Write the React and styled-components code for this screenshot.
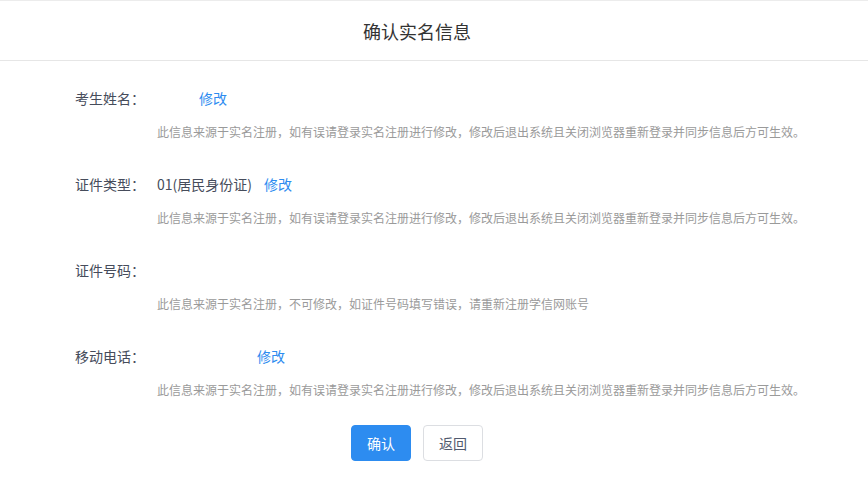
import React from "react";
import styled, { createGlobalStyle } from "styled-components";

const Global = createGlobalStyle`
  html, body { margin: 0; padding: 0; background: #fff; }
  body { font-family: "Noto Sans CJK SC", "Noto Sans", sans-serif; }
`;

const Page = styled.div`
  width: 868px;
  min-height: 495px;
  background: #fff;
`;

const Header = styled.header`
  height: 59px;
  border-top: 1px solid #ececec;
  border-bottom: 1px solid #e6e6e6;
  display: flex;
  align-items: center;
  justify-content: center;
  padding-right: 34px;
  font-size: 18px;
  color: #333;
`;

const Content = styled.div`
  padding: 27px 0 0 75px;
`;

const Item = styled.div`
  margin-bottom: 32px;
`;

const Row = styled.div`
  display: flex;
  align-items: center;
  height: 20px;
  font-size: 14px;
  color: #464c5b;
`;

const Label = styled.span`
  width: 82px;
  flex-shrink: 0;
`;

const Value = styled.span`
  display: inline-block;
  min-width: ${(p) => p.$w || 0}px;
`;

const Link = styled.a`
  margin-left: 12px;
  color: #2d8cf0;
  cursor: pointer;
`;

const Desc = styled.div`
  margin: 14px 0 0 82px;
  line-height: 20px;
  font-size: 12px;
  color: #9a9a9a;
`;

const Actions = styled.div`
  display: flex;
  justify-content: center;
  gap: 12px;
  margin-top: -7px;
  padding-right: 34px;
`;

const Button = styled.button`
  width: 60px;
  height: 36px;
  border-radius: 4px;
  font-family: inherit;
  font-size: 14px;
  cursor: pointer;
  border: 1px solid ${(p) => (p.$primary ? "#2d8cf0" : "#dcdee2")};
  background: ${(p) => (p.$primary ? "#2d8cf0" : "#fff")};
  color: ${(p) => (p.$primary ? "#fff" : "#515a6e")};
`;

const note1 =
  "此信息来源于实名注册，如有误请登录实名注册进行修改，修改后退出系统且关闭浏览器重新登录并同步信息后方可生效。";
const note2 = "此信息来源于实名注册，不可修改，如证件号码填写错误，请重新注册学信网账号";

export default function App() {
  return (
    <Page>
      <Global />
      <Header>确认实名信息</Header>
      <Content>
        <Item>
          <Row>
            <Label>考生姓名：</Label>
            <Value $w={30}></Value>
            <Link>修改</Link>
          </Row>
          <Desc>{note1}</Desc>
        </Item>
        <Item>
          <Row>
            <Label>证件类型：</Label>
            <Value>01(居民身份证)</Value>
            <Link>修改</Link>
          </Row>
          <Desc>{note1}</Desc>
        </Item>
        <Item>
          <Row>
            <Label>证件号码：</Label>
            <Value></Value>
          </Row>
          <Desc>{note2}</Desc>
        </Item>
        <Item>
          <Row>
            <Label>移动电话：</Label>
            <Value $w={88}></Value>
            <Link>修改</Link>
          </Row>
          <Desc>{note1}</Desc>
        </Item>
      </Content>
      <Actions>
        <Button $primary>确认</Button>
        <Button>返回</Button>
      </Actions>
    </Page>
  );
}
